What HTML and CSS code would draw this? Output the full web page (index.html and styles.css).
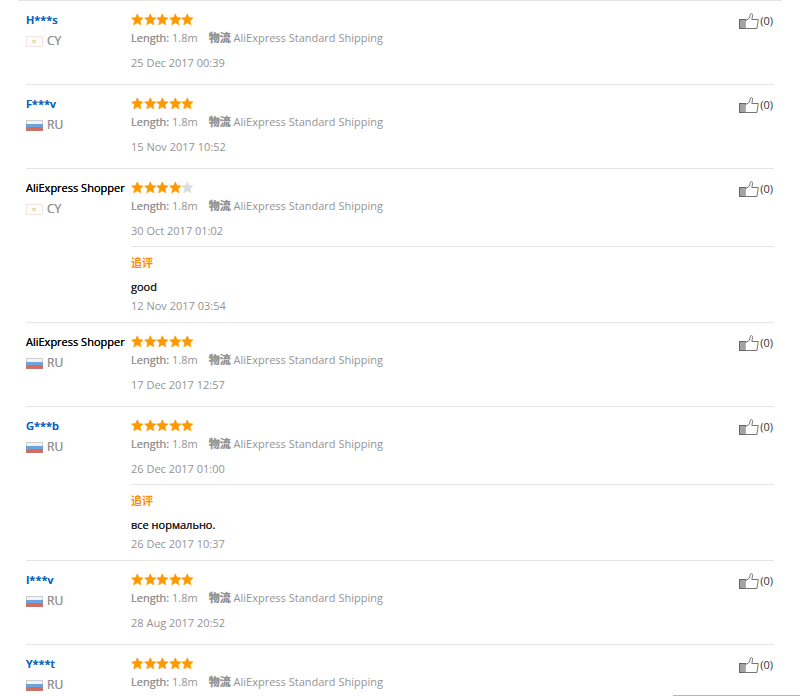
FILE: index.html
```
<!DOCTYPE html>
<html lang="en">
<head>
	<meta charset="utf-8">
	<title>Feedback</title>
	<link rel="stylesheet" href="styles.css">
</head>
<body>
	<div class="feedback-list" id="list"></div>
	<div class="status-edge"></div>

	<svg class="sprite" width="0" height="0" aria-hidden="true">
		<symbol id="star" viewBox="0 0 12 12">
			<path d="M6 0.6 L7.6 4.1 L11.4 4.6 L8.6 7.2 L9.4 11.1 L6 9.2 L2.6 11.1 L3.4 7.2 L0.6 4.6 L4.4 4.1 Z" stroke-width="0.6" stroke-linejoin="round"/>
		</symbol>
		<symbol id="thumb" viewBox="0 0 20 16">
			<rect x="0.5" y="6.5" width="6" height="9" fill="#a3a3a3" stroke="#666"/>
			<path d="M6.5 7.5 L9.5 6 Q11.2 4.2 11.2 1.8 Q11.4 0.5 12.6 0.6 Q13.8 0.8 13.6 2.6 L12.8 6.5 L19.3 6.5 L17.9 15.5 L6.5 15.5" fill="#fff" stroke="#777" stroke-linejoin="round"/>
		</symbol>
		<symbol id="flag-CY" viewBox="0 0 17 11">
			<rect x="0.5" y="0.5" width="16" height="10" fill="#fffefb" stroke="#f4e3e3"/>
			<path d="M5.5 3.8 L7.3 4.6 L10.5 3.8 L9 5.6 L7 5.8 Z" fill="#e5c878"/>
			<path d="M6.2 6.4 Q8 7.8 10 6.2" fill="none" stroke="#c6d7a4" stroke-width="0.8"/>
		</symbol>
		<symbol id="flag-RU" viewBox="0 0 17 11">
			<rect width="17" height="4" fill="#f1f3f5"/>
			<rect y="4" width="17" height="4" fill="#6ba5dc"/>
			<rect y="7" width="17" height="4" fill="#dc6a58"/>
			<rect x="0.5" y="0.5" width="16" height="10" fill="none" stroke="#8c8c9c" stroke-opacity="0.35"/>
		</symbol>
	</svg>

	<script>
		const items = [
			{ name: 'H***s', link: true, country: 'CY', stars: 5, date: '25 Dec 2017 00:39' },
			{ name: 'F***v', link: true, country: 'RU', stars: 5, date: '15 Nov 2017 10:52' },
			{ name: 'AliExpress Shopper', country: 'CY', stars: 4, date: '30 Oct 2017 01:02', more: 'good', moreDate: '12 Nov 2017 03:54' },
			{ name: 'AliExpress Shopper', country: 'RU', stars: 5, date: '17 Dec 2017 12:57' },
			{ name: 'G***b', link: true, country: 'RU', stars: 5, date: '26 Dec 2017 01:00', more: 'все нормально.', moreDate: '26 Dec 2017 10:37' },
			{ name: 'I***v', link: true, country: 'RU', stars: 5, date: '28 Aug 2017 20:52' },
			{ name: 'Y***t', link: true, country: 'RU', stars: 5 }
		];

		function starsHtml(count) {
			let html = '';
			for (let i = 0; i < 5; i++) {
				html += `<svg class="star ${i < count ? 'on' : ''}"><use href="#star"/></svg>`;
			}
			return html;
		}

		document.getElementById('list').innerHTML = items.map((item) => `
			<div class="feedback-item">
				<div class="user">
					<div class="user-name">${item.link ? `<a href="#">${item.name}</a>` : item.name}</div>
					<div class="user-country"><svg class="flag"><use href="#flag-${item.country}"/></svg><b>${item.country}</b></div>
				</div>
				<div class="main">
					<div class="top">
						<div class="rating">
							<div class="stars" role="img" aria-label="${item.stars} / 5">${starsHtml(item.stars)}</div>
							<div class="order-info">
								<span><strong>Length:</strong> 1.8m</span>
								<span><strong lang="zh">物流</strong> AliExpress Standard Shipping</span>
							</div>
						</div>
						<button type="button" class="like"><svg class="thumb"><use href="#thumb"/></svg>(0)</button>
					</div>
					${item.date ? `<div class="date">${item.date}</div>` : ''}
					${item.more ? `<div class="follow-up">
						<div class="follow-title" lang="zh">追评</div>
						<div class="follow-text">${item.more}</div>
						<div class="follow-date">${item.moreDate}</div>
					</div>` : ''}
				</div>
			</div>`).join('');
	</script>
</body>
</html>
```
FILE: styles.css
```
body {
    margin: 0;
    background: #fff;
    color: #000;
    font-family: "Open Sans", "Noto Sans CJK SC", sans-serif;
    font-size: 11px;
    line-height: 18px;
}

.sprite {
    position: absolute;
}

.feedback-list {
    margin: 0 18px;
    padding: 0 8px;
    border-top: 1px solid #e6e6e6;
}

.feedback-item {
    display: flex;
    padding: 10px 0 6px;
}

.feedback-item + .feedback-item {
    border-top: 1px solid #e6e6e6;
}

.user {
    flex: 0 0 105px;
    white-space: nowrap;
}

.user-name {
    font-weight: 500;
    text-shadow: 0 0 0 currentColor;
}

.user-name a {
    color: #0a66bd;
    font-weight: 600;
    text-decoration: none;
}

.user-country {
    display: flex;
    align-items: center;
    gap: 4px;
    margin-top: 3px;
    color: #949494;
    font-size: 12px;
}

.user-country b {
    font-weight: 400;
    text-shadow: 0 0 0 currentColor;
}

.flag {
    width: 17px;
    height: 11px;
}

.main {
    flex: 1;
    min-width: 0;
}

.top {
    display: flex;
    justify-content: space-between;
    align-items: flex-start;
}

.stars {
    display: flex;
    align-items: center;
    width: 63px;
    height: 17px;
    margin-bottom: 1px;
}

.star {
    flex: 1;
    min-width: 0;
    height: 13px;
    fill: #dcdcdc;
    stroke: #dcdcdc;
}

.star.on {
    fill: #ff9900;
    stroke: #ff9900;
}

.order-info {
    display: flex;
    gap: 11px;
    height: 18px;
    color: #949494;
}

.order-info strong {
    font-weight: 500;
    text-shadow: 0 0 0 currentColor;
}

.order-info strong:lang(zh) {
    font-weight: 700;
}

.like {
    display: flex;
    align-items: center;
    gap: 1px;
    margin-top: 1px;
    padding: 0 1px 0 0;
    border: 0;
    background: none;
    color: #333;
    font: inherit;
    cursor: pointer;
}

.thumb {
    width: 20px;
    height: 16px;
}

.date {
    margin: 7px 0 6px;
    color: #949494;
}

.follow-up {
    padding: 7px 0 1px;
    border-top: 1px solid #e6e6e6;
}

.follow-title {
    height: 18px;
    margin-bottom: 6px;
    color: #ff8a00;
    font-weight: 700;
}

.follow-text {
    margin-bottom: 1px;
    color: #222;
    text-shadow: 0 0 0 currentColor;
}

.follow-date {
    color: #949494;
}

/* edge of the browser status bubble */
.status-edge {
    position: fixed;
    right: 0;
    bottom: 0;
    width: 127px;
    border-top: 1px solid #b5b5b5;
}
```
